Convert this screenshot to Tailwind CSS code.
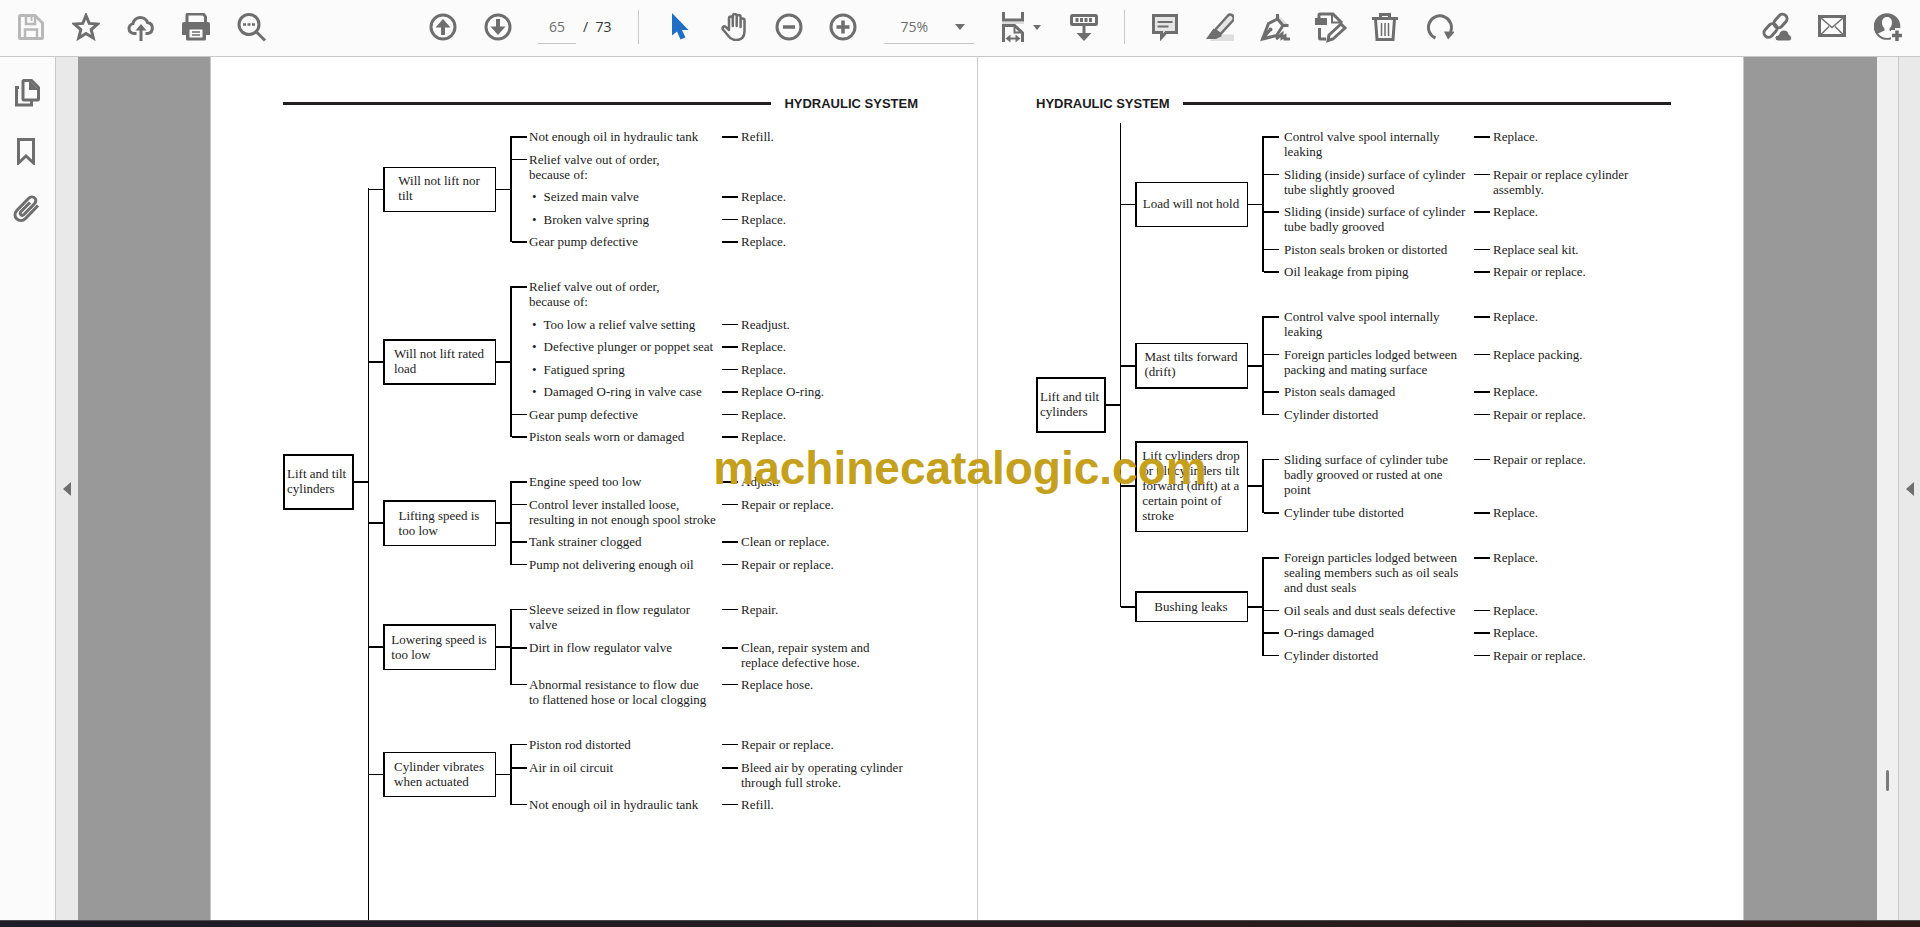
<!DOCTYPE html>
<html lang="en">
<head>
  <meta charset="UTF-8">
  <meta name="viewport" content="width=device-width, initial-scale=1.0">
  <title>Hydraulic System - Troubleshooting</title>
  <script src="https://cdn.jsdelivr.net/npm/@tailwindcss/browser@4"></script>
</head>
<body class="relative flex h-screen flex-col overflow-hidden bg-[#fbfbfb] font-['Open_Sans',sans-serif] text-[#6e6e6e]">

  <!-- Toolbar -->
  <header class="flex h-[57px] shrink-0 items-center border-b border-[#c8c8c8] pt-0 pr-[18px] pb-[2px] pl-[17px]">
    <div class="flex gap-[27px]">
      <button type="button" aria-label="Save" class="size-7 text-[#b8b8b8]">
        <svg viewBox="0 0 28 28" fill="none" stroke="currentColor" stroke-width="3"><path d="M2.5 3.5q0-1 1-1h14.5l7.5 7.5v14.500q0 1-1 1h-21q-1 0-1-1z"/><path d="M9 3v8h9V3M8 25v-8.500h12V25" stroke-width="2.500"/><path d="M14.500 4v4" stroke-width="2"/></svg>
      </button>
      <button type="button" aria-label="Star" class="size-7">
        <svg viewBox="0 0 28 28" fill="none" stroke="currentColor" stroke-width="3"><path d="M14 2.500l3.200 7.900 8.600.6-6.600 5.500 2.100 8.500L14 20.400 6.700 25l2.100-8.500L2.200 11l8.600-.6z"/></svg>
      </button>
      <button type="button" aria-label="Upload to cloud" class="size-7">
        <svg viewBox="0 0 28 28" fill="none" stroke="currentColor" stroke-width="3"><path d="M9.500 20.500H7a5 5 0 0 1-1-9.900A7.500 7.500 0 0 1 20.500 9.500a5.600 5.600 0 0 1 .5 11h-2.500"/><path d="M14 28V15"/><path d="M8.500 17.500 14 11l5.500 6.500z" fill="currentColor" stroke="none"/></svg>
      </button>
      <button type="button" aria-label="Print" class="size-7">
        <svg viewBox="0 0 28 28" fill="none" stroke="currentColor"><path d="M5 9V2.500q0-1.500 1.500-1.500h14q1.500 0 3 3V9" stroke-width="3"/><path d="M2 9h24q2 0 2 2v11h-4v4q0 1.500-1.500 1.500h-17Q4 27.500 4 26v-4H0V11q0-2 2-2z" fill="currentColor" stroke="none"/><path d="M7.500 16.500h13v8h-13z" fill="#fbfbfb" stroke="none"/><path d="M10 19h8M10 22h8" stroke-width="1.500"/></svg>
      </button>
      <button type="button" aria-label="Search" class="size-7">
        <svg viewBox="0 0 28 28" fill="none" stroke="currentColor" stroke-width="3" overflow="visible"><circle cx="12" cy="11.500" r="10"/><path d="M19 18.500l9 9"/><path d="M6 11.500h3M10.500 11.500h3M15 11.500h3" stroke-width="2.500"/></svg>
      </button>
    </div>

    <div class="ml-[164px] flex gap-[27px]">
      <button type="button" aria-label="Previous page" class="size-7">
        <svg viewBox="0 0 28 28" fill="none" stroke="currentColor" stroke-width="3"><circle cx="14" cy="14" r="12"/><path d="M14 22V11" stroke-width="4"/><path d="M6.500 14.500 14 6l7.500 8.500z" fill="currentColor" stroke="none"/></svg>
      </button>
      <button type="button" aria-label="Next page" class="size-7">
        <svg viewBox="0 0 28 28" fill="none" stroke="currentColor" stroke-width="3"><circle cx="14" cy="14" r="12"/><path d="M14 6v11" stroke-width="4"/><path d="M6.500 13.500 14 22l7.500-8.500z" fill="currentColor" stroke="none"/></svg>
      </button>
    </div>

    <div class="ml-[26px] flex items-center text-sm">
      <input type="text" aria-label="Page number" value="65" class="h-[34px] w-[38px] border-b border-[#c8c8c8] text-center">
      <span class="ml-[7px] whitespace-pre text-[#333]">/  73</span>
    </div>

    <div class="ml-[27px] h-[34px] w-px bg-[#c8c8c8]"></div>

    <div class="ml-[28px] flex gap-[26px]">
      <button type="button" aria-label="Select tool" class="size-7 text-[#1f6fc5]">
        <svg viewBox="0 0 28 28" fill="currentColor"><path d="M5 0v22.500l5-4 3.500 8 5-2-3.500-7.500h6.500z"/></svg>
      </button>
      <button type="button" aria-label="Hand tool" class="size-7">
        <svg viewBox="0 0 28 28" fill="none" stroke="currentColor" stroke-width="2.500" stroke-linecap="round" stroke-linejoin="round"><path d="M8 16V5.500a1.900 1.900 0 0 1 3.800 0V13 3a1.900 1.900 0 0 1 3.900 0v10V4a1.900 1.900 0 0 1 3.900 0v10V7.500a1.900 1.900 0 0 1 3.900 0V18c0 6-3 9-8.500 9-4 0-6-1.500-8-4.500L2 16.500c-1.300-2 .8-4 2.700-2.600L8 17"/></svg>
      </button>
      <button type="button" aria-label="Zoom out" class="size-7">
        <svg viewBox="0 0 28 28" fill="none" stroke="currentColor" stroke-width="3"><circle cx="14" cy="14" r="12"/><path d="M8 14h12" stroke-width="3.500"/></svg>
      </button>
      <button type="button" aria-label="Zoom in" class="size-7">
        <svg viewBox="0 0 28 28" fill="none" stroke="currentColor" stroke-width="3"><circle cx="14" cy="14" r="12"/><path d="M7.500 14h13M14 7.500v13" stroke-width="3.500"/></svg>
      </button>
    </div>

    <div class="relative ml-[27px] text-sm">
      <select aria-label="Zoom level" class="h-[34px] w-[90px] appearance-none border-b border-[#c8c8c8] pl-4">
        <option>75%</option>
        <option>100%</option>
        <option>125%</option>
      </select>
      <svg viewBox="0 0 10 6" class="pointer-events-none absolute top-[14px] right-[9px] h-[6px] w-[10px]" fill="currentColor"><path d="M0 0h10L5 6z"/></svg>
    </div>

    <button type="button" aria-label="Fit width" class="ml-[25px] flex h-7 w-[42px] items-center gap-[6px]">
      <svg viewBox="0 0 28 28" class="size-7 shrink-0 overflow-visible" fill="none" stroke="currentColor" stroke-width="3"><path d="M4.500-1v8h19v-8"/><path d="M3 10h22" stroke="#dcdcdc" stroke-width="2"/><path d="M4.500 29V12.500h11l8 7.500v9"/><path d="M15.500 12v7.500h8" stroke-width="2"/><path d="M9 25.500h10" stroke-width="2"/><path d="M6.500 25.500l5-4v8zM21.500 25.500l-5-4v8z" fill="currentColor" stroke="none"/></svg>
      <svg viewBox="0 0 8 5" class="h-[5px] w-[8px] shrink-0" fill="currentColor"><path d="M0 0h8L4 5z"/></svg>
    </button>
    <button type="button" aria-label="Page display" class="ml-[29px] size-7">
      <svg viewBox="0 0 28 28" fill="none" stroke="currentColor" stroke-width="3"><rect x="1.500" y="2.500" width="25" height="9" rx="1"/><path d="M5.500 7h17.500" stroke-width="4" stroke-dasharray="3 1.500"/><path d="M14 13v9"/><path d="M6.500 20h15L14 28z" fill="currentColor" stroke="none"/></svg>
    </button>

    <div class="ml-[26px] h-[34px] w-px bg-[#c8c8c8]"></div>

    <div class="ml-[26px] flex gap-[27px]">
      <button type="button" aria-label="Comment" class="size-7">
        <svg viewBox="0 0 28 28" fill="none" stroke="currentColor" stroke-width="3"><path d="M2.500 2.500h23v17H15l-4.500 5v-5h-8z" fill="#e6e6e6"/><path d="M6.500 9h15M6.500 13.500h11" stroke-width="2"/></svg>
      </button>
      <button type="button" aria-label="Highlight" class="size-7">
        <svg viewBox="0 0 28 28" fill="none" stroke="currentColor" stroke-width="2.500"><path d="M8 21.500h21V28H4z" fill="#dedede" stroke="none"/><path d="M9 17 22 2.500q2-2 4.500 0 2.500 2.500.5 5L14.500 21z" fill="#e6e6e6"/><path d="M7.500 15.500 16 23l-6 3H0z" fill="currentColor" stroke="none"/></svg>
      </button>
      <button type="button" aria-label="Sign" class="size-7">
        <svg viewBox="0 0 28 28" class="overflow-visible" fill="none" stroke="currentColor" stroke-width="3"><path d="M17 2l10 9-4 1.500-8-7z" fill="#dedede" stroke="none"/><path d="M16.500 1v5L22 12.500h5.500M16.500 6l-9 4.500-6 15.500 14-3.500L22 12.500M1.500 26l7-8.500"/><circle cx="9.500" cy="16.500" r="2" fill="currentColor" stroke="none"/><path d="M15 26l6-5v4l3-2v3h5"/></svg>
      </button>
      <button type="button" aria-label="Stamp" class="size-7">
        <svg viewBox="0 0 28 28" class="overflow-visible" fill="none" stroke="currentColor" stroke-width="3"><path d="M3 5V2q0-1 1-1h13l9 9"/><path d="M16 1v8.500h8" stroke-width="2"/><path d="M-1 5h12v7H-1z" fill="currentColor" stroke="none"/><path d="M3.500 15v10q0 1 1 1H10"/><path d="M13 22 25 11l4 4-12 11-5 1.500z" fill="#fbfbfb"/></svg>
      </button>
      <button type="button" aria-label="Delete" class="size-7">
        <svg viewBox="0 0 28 28" fill="none" stroke="currentColor" stroke-width="3"><path d="M1 5.500h26M9.500 5V1.500h9V5"/><path d="M4.500 6l1.500 20.500h16L23.500 6"/><path d="M10.500 10v13M14 10v13M17.500 10v13" stroke-width="1.500"/></svg>
      </button>
      <button type="button" aria-label="Rotate" class="size-7">
        <svg viewBox="0 0 28 28" fill="none" stroke="currentColor" stroke-width="3"><path d="M9.500 25A11.500 11.500 0 1 1 24.500 19"/><path d="M18 18.500h11l-7 8z" fill="currentColor" stroke="none"/></svg>
      </button>
    </div>

    <div class="ml-auto flex gap-[28px]">
      <button type="button" aria-label="Share link" class="size-7">
        <svg viewBox="0 0 28 28" class="overflow-visible" fill="none" stroke="currentColor" stroke-width="3"><rect x="-4.500" y="-7.500" width="9" height="15" rx="4.500" transform="translate(18.500 8) rotate(42)"/><rect x="-4.500" y="-7.500" width="9" height="15" rx="4.500" transform="translate(8.500 17.500) rotate(42)"/><path d="M16 28q-3.500 0-3-3.500.5-2.500 3.500-2.500 1.500-5 5.500-5t5 4.500q3 .5 2.500 4 0 2.500-2.500 2.500z" fill="currentColor" stroke="#fbfbfb" stroke-width="1"/></svg>
      </button>
      <button type="button" aria-label="Send email" class="size-7">
        <svg viewBox="0 0 28 28" fill="none" stroke="currentColor" stroke-width="3"><path d="M1.500 3.500h25v19h-25z"/><path d="M3 5l11 9.500L25 5M3 21.500l8-8M25 21.500l-8-8" stroke-width="1.500"/></svg>
      </button>
      <button type="button" aria-label="Invite people" class="size-7">
        <svg viewBox="0 0 28 28" fill="none" stroke="currentColor" stroke-width="2.500"><circle cx="13" cy="13.500" r="13.300" fill="currentColor" stroke="none"/><path d="M13 4c3.500 0 5 2.500 5 5.500 0 2.500-1 4.500-2.500 6v2l6.500 3q-4 4.500-9 4.500T4 20.500l6.500-3v-2C9 14 8 12 8 9.500 8 6.500 9.500 4 13 4z" fill="#fbfbfb" stroke="none"/><path d="M17 17h4v-2h5v4h3v10H17z" fill="#fbfbfb" stroke="none"/><path d="M18 22.500h10.500M23 17.500V28" stroke-width="3.500"/></svg>
      </button>
    </div>
  </header>

  <div class="flex min-h-0 flex-1">
    <!-- Navigation rail -->
    <nav class="flex w-[56px] shrink-0 flex-col items-center gap-[30px] border-r border-[#c8c8c8] pt-[22px] pr-[2px]">
      <button type="button" aria-label="Page thumbnails" class="size-7">
        <svg viewBox="0 0 28 28" fill="none" stroke="currentColor" stroke-width="3"><path d="M10 1.500h8.500l7 7V20q0 1-1 1H11q-1 0-1-1V2.500q0-1 1-1z"/><path d="M17 2v8h8" fill="currentColor" stroke-width="2"/><path d="M6 8.500H3.500V26h15v-4"/></svg>
      </button>
      <button type="button" aria-label="Bookmarks" class="size-7">
        <svg viewBox="0 0 28 28" fill="none" stroke="currentColor" stroke-width="3"><path d="M5.500 2.500h15v23.500L13 19l-7.500 7z"/></svg>
      </button>
      <button type="button" aria-label="Attachments" class="size-7">
        <svg viewBox="0 0 28 28" fill="none" stroke="currentColor" stroke-width="3"><path d="M25 10.500 12.500 23.500c-3 3-6.500 2.500-8.700.4-2.300-2.300-2.600-5.600.2-8.600L15.500 3.500c2-2 4.700-2 6.200-.5 1.600 1.600 1.500 4-.5 6L11 19.500c-1 1-2.400 1-3.200.2-.8-.8-.8-2.200.2-3.200L17 7.500"/></svg>
      </button>
    </nav>
    <button type="button" aria-label="Toggle navigation pane" class="flex w-[22px] shrink-0 items-center justify-center bg-[#e9e9e9]">
      <svg viewBox="0 0 8 14" class="h-[14px] w-2" fill="currentColor"><path d="M8 0v14L0 7z"/></svg>
    </button>

    <!-- Document -->
    <main class="flex min-w-0 flex-1 overflow-hidden bg-[#999] pr-[133px] pl-[132px] font-['Liberation_Serif',serif] text-[13px] leading-[15px] text-[#1c1c22]">
      <article class="flex min-w-0 flex-1 flex-col border-l border-[#c8c8c8] bg-white pr-[59px] pl-[72px]">
        <div class="mt-[39px] flex h-[15px] shrink-0 items-center gap-[13px]">
          <div class="h-[3px] flex-1 bg-[#231f20]"></div>
          <h1 class="font-['Liberation_Sans',sans-serif] text-[13px] font-bold">HYDRAULIC SYSTEM</h1>
        </div>
        <div id="left-tree" class="mt-3 flex min-h-0 flex-1"></div>
      </article>
      <article class="flex min-w-0 flex-1 flex-col border-x border-[#c8c8c8] bg-white pr-[72px] pl-[58px]">
        <div class="mt-[39px] flex h-[15px] shrink-0 items-center gap-[13px]">
          <h1 class="font-['Liberation_Sans',sans-serif] text-[13px] font-bold">HYDRAULIC SYSTEM</h1>
          <div class="h-[3px] flex-1 bg-[#231f20]"></div>
        </div>
        <div id="right-tree" class="mt-3 flex"></div>
      </article>
    </main>

    <div class="flex w-[21px] shrink-0 flex-col items-center bg-[#f0f0f0]">
      <div class="mt-[713px] h-[21px] w-[3px] rounded-full bg-[#7a7a7a]"></div>
    </div>
    <button type="button" aria-label="Toggle tools pane" class="flex w-[22px] shrink-0 items-center justify-center border-l border-[#c8c8c8] bg-[#e9e9e9]">
      <svg viewBox="0 0 8 14" class="h-[14px] w-2" fill="currentColor"><path d="M8 0v14L0 7z"/></svg>
    </button>
  </div>

  <footer class="h-[7px] shrink-0 border-t border-[#4a4a4a] bg-linear-to-r from-[#1e1c29] to-[#2d1a18]"></footer>

  <p class="pointer-events-none absolute top-[445px] left-1/2 -translate-x-1/2 font-['Liberation_Sans',sans-serif] text-[46px] leading-none font-bold text-[#c5a01c]">machinecatalogic.com</p>

  <script>
    // box: box edges and height, link: weight of the connectors beside it
    // rows: [cause, remedy, line weight], a cause that starts with * is a sub item
    const leftGroups = [
      { title: 'Will not lift nor\ntilt', box: 'h-[45px] border border-l-2', link: 1, rows: [
        ['Not enough oil in hydraulic tank', 'Refill.', 2],
        ['Relief valve out of order,\nbecause of:', '', 1],
        ['*Seized main valve', 'Replace.', 2],
        ['*Broken valve spring', 'Replace.', 1],
        ['Gear pump defective', 'Replace.', 2]
      ] },
      { title: 'Will not lift rated\nload', box: 'h-[46px] border-2 border-r', link: 2, rows: [
        ['Relief valve out of order,\nbecause of:', '', 2],
        ['*Too low a relief valve setting', 'Readjust.', 1],
        ['*Defective plunger or poppet seat', 'Replace.', 2],
        ['*Fatigued spring', 'Replace.', 1],
        ['*Damaged O-ring in valve case', 'Replace O-ring.', 2],
        ['Gear pump defective', 'Replace.', 1],
        ['Piston seals worn or damaged', 'Replace.', 2]
      ] },
      { title: 'Lifting speed is\ntoo low', box: 'h-[46px] border border-t-2 border-l-2', link: 2, rows: [
        ['Engine speed too low', 'Adjust.', 2],
        ['Control lever installed loose,\nresulting in not enough spool stroke', 'Repair or replace.', 1],
        ['Tank strainer clogged', 'Clean or replace.', 2],
        ['Pump not delivering enough oil', 'Repair or replace.', 1]
      ] },
      { title: 'Lowering speed is\ntoo low', box: 'h-[46px] border border-t-2 border-l-2', link: 2, tail: true, rows: [
        ['Sleeve seized in flow regulator\nvalve', 'Repair.', 1],
        ['Dirt in flow regulator valve', 'Clean, repair system and\nreplace defective hose.', 2],
        ['Abnormal resistance to flow due\nto flattened hose or local clogging', 'Replace hose.', 1]
      ] },
      { title: 'Cylinder vibrates\nwhen actuated', box: 'h-[45px] border border-l-2', link: 1, rows: [
        ['Piston rod distorted', 'Repair or replace.', 1],
        ['Air in oil circuit', 'Bleed air by operating cylinder\nthrough full stroke.', 2],
        ['Not enough oil in hydraulic tank', 'Refill.', 1]
      ] }
    ];

    const rightGroups = [
      { title: 'Load will not hold', box: 'h-[45px] border border-l-2', link: 1, rows: [
        ['Control valve spool internally\nleaking', 'Replace.', 2],
        ['Sliding (inside) surface of cylinder\ntube slightly grooved', 'Repair or replace cylinder\nassembly.', 1],
        ['Sliding (inside) surface of cylinder\ntube badly grooved', 'Replace.', 2],
        ['Piston seals broken or distorted', 'Replace seal kit.', 1],
        ['Oil leakage from piping', 'Repair or replace.', 2]
      ] },
      { title: 'Mast tilts forward\n(drift)', box: 'h-[46px] border border-b-2 border-l-2', link: 2, rows: [
        ['Control valve spool internally\nleaking', 'Replace.', 2],
        ['Foreign particles lodged between\npacking and mating surface', 'Replace packing.', 1],
        ['Piston seals damaged', 'Replace.', 2],
        ['Cylinder distorted', 'Repair or replace.', 1]
      ] },
      { title: 'Lift cylinders drop\nor tilt cylinders tilt\nforward (drift) at a\ncertain point of\nstroke', box: '-my-3 h-[91px] border border-t-2 border-l-2', link: 2, rows: [
        ['Sliding surface of cylinder tube\nbadly grooved or rusted at one\npoint', 'Repair or replace.', 1],
        ['Cylinder tube distorted', 'Replace.', 2]
      ] },
      { title: 'Bushing leaks', box: 'h-[31px] border border-t-2 border-l-2', link: 2, rows: [
        ['Foreign particles lodged between\nsealing members such as oil seals\nand dust seals', 'Replace.', 2],
        ['Oil seals and dust seals defective', 'Replace.', 1],
        ['O-rings damaged', 'Replace.', 2],
        ['Cylinder distorted', 'Repair or replace.', 1]
      ] }
    ];

    function line(weight, width) {
      return `<div class="${width} ${weight === 2 ? 'h-[2px]' : 'h-px'} shrink-0 bg-black"></div>`;
    }

    function tick(weight, width) {
      return `<div class="flex h-[15px] shrink-0 items-center">${line(weight, width)}</div>`;
    }

    function row([cause, remedy, weight], gap) {
      const sub = cause.startsWith('*');
      return `<li class="flex not-last:odd:pb-2 not-last:even:pb-[7px]">
        <div class="flex w-[210px] shrink-0 ${sub ? 'gap-[7px] pl-[20px]' : gap}">
          ${sub ? '<span>•</span>' : tick(weight, 'w-[15px]')}
          <p class="whitespace-pre">${sub ? cause.slice(1) : cause}</p>
        </div>
        ${remedy ? tick(weight, 'w-4') + `<p class="ml-[3px] whitespace-pre">${remedy}</p>` : ''}
      </li>`;
    }

    function tree(id, groups, root, rootBox, trunk, gap) {
      document.getElementById(id).innerHTML = `
        <div class="${root} flex h-[56px] shrink-0 items-center">
          <h2 class="${rootBox} flex h-full items-center border-2 border-black pb-[2px] pl-[2px] whitespace-pre">Lift and tilt\ncylinders</h2>
          ${line(2, 'w-[14px]')}
        </div>
        <div class="${trunk} w-px shrink-0 bg-black"></div>
        <div class="flex flex-col gap-[30px] pt-[6px]">
          ${groups.map(g => `<section class="flex">
            <div class="flex shrink-0 items-center ${g.tail ? 'mb-[15px]' : ''}">
              ${line(g.link, 'w-[14px]')}
              <h3 class="${g.box} flex w-[113px] items-center justify-center border-black pr-[2px] pb-[2px] whitespace-pre">${g.title}</h3>
              ${line(g.link, 'w-[14px]')}
            </div>
            <div class="mt-[7px] w-[2px] shrink-0 bg-black ${g.tail ? 'mb-[22px]' : 'mb-[7px]'}"></div>
            <ul>${g.rows.map(r => row(r, gap)).join('')}</ul>
          </section>`).join('')}
        </div>`;
    }

    tree('left-tree', leftGroups, 'mt-[331px]', 'w-[71px]', 'mt-[65px]', 'gap-[2px]');
    tree('right-tree', rightGroups, 'mt-[254px]', 'w-[70px]', 'mb-[56px]', 'gap-[5px]');
  </script>
</body>
</html>
